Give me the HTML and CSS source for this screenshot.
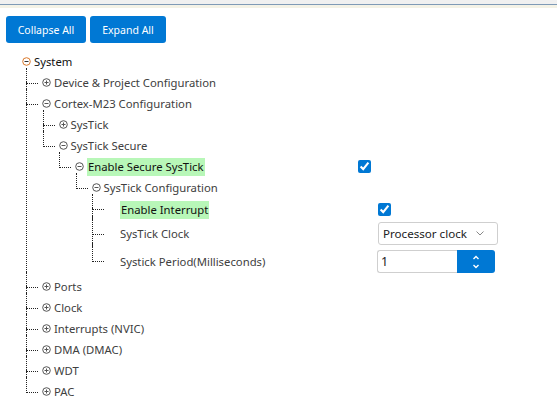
FILE: index.html
```html
<!DOCTYPE html>
<html lang="en">

<head>
    <meta charset="UTF-8">
    <title>Configuration</title>
    <link rel="stylesheet" href="styles.css">
</head>

<body>
    <div class="topbar"></div>
    <div class="toolbar">
        <button class="btn">Collapse All</button>
        <button class="btn">Expand All</button>
    </div>
    <ul class="tree">
        <li class="root">
            <div class="row">
                <svg class="tog" viewBox="0 0 9 9"><circle cx="4.5" cy="4.5" r="3.8" class="ring-sys"/><path d="M2.5 4.5h4"/></svg>
                <span class="label dark">System</span>
            </div>
            <ul>
                <li>
                    <div class="row">
                        <svg class="tog" viewBox="0 0 9 9"><circle cx="4.5" cy="4.5" r="3.8"/><path d="M2.5 4.5h4M4.5 2.5v4"/></svg>
                        <span class="label">Device &amp; Project Configuration</span>
                    </div>
                </li>
                <li>
                    <div class="row">
                        <svg class="tog" viewBox="0 0 9 9"><circle cx="4.5" cy="4.5" r="3.8"/><path d="M2.5 4.5h4"/></svg>
                        <span class="label">Cortex-M23 Configuration</span>
                    </div>
                    <ul>
                        <li>
                            <div class="row">
                                <svg class="tog" viewBox="0 0 9 9"><circle cx="4.5" cy="4.5" r="3.8"/><path d="M2.5 4.5h4M4.5 2.5v4"/></svg>
                                <span class="label">SysTick</span>
                            </div>
                        </li>
                        <li>
                            <div class="row">
                                <svg class="tog" viewBox="0 0 9 9"><circle cx="4.5" cy="4.5" r="3.8"/><path d="M2.5 4.5h4"/></svg>
                                <span class="label">SysTick Secure</span>
                            </div>
                            <ul>
                                <li>
                                    <div class="row">
                                        <svg class="tog" viewBox="0 0 9 9"><circle cx="4.5" cy="4.5" r="3.8"/><path d="M2.5 4.5h4"/></svg>
                                        <span class="label name-l3"><span class="hl">Enable Secure SysTick</span></span>
                                        <input type="checkbox" class="check" checked>
                                    </div>
                                    <ul>
                                        <li>
                                            <div class="row">
                                                <svg class="tog" viewBox="0 0 9 9"><circle cx="4.5" cy="4.5" r="3.8"/><path d="M2.5 4.5h4"/></svg>
                                                <span class="label">SysTick Configuration</span>
                                            </div>
                                            <ul>
                                                <li class="row-check">
                                                    <div class="row">
                                                        <span class="tog"></span>
                                                        <span class="label name-l5"><span class="hl">Enable Interrupt</span></span>
                                                        <input type="checkbox" class="check" checked>
                                                    </div>
                                                </li>
                                                <li class="row-select">
                                                    <div class="row">
                                                        <span class="tog"></span>
                                                        <span class="label name-l5">SysTick Clock</span>
                                                        <div class="select">
                                                            <span>Processor clock</span>
                                                            <svg class="chev" viewBox="0 0 8 5"><path d="M0.5 0.5l3.5 3.5 3.5-3.5"/></svg>
                                                        </div>
                                                    </div>
                                                </li>
                                                <li class="row-number">
                                                    <div class="row">
                                                        <span class="tog"></span>
                                                        <span class="label name-l5">Systick Period(Milliseconds)</span>
                                                        <div class="number">
                                                            <span class="num-field">1</span>
                                                            <span class="spin">
                                                                <svg viewBox="0 0 8 16"><path d="M1.5 5l2.5-2.5 2.5 2.5M1.5 11l2.5 2.5 2.5-2.5"/></svg>
                                                            </span>
                                                        </div>
                                                    </div>
                                                </li>
                                            </ul>
                                        </li>
                                    </ul>
                                </li>
                            </ul>
                        </li>
                    </ul>
                </li>
                <li>
                    <div class="row">
                        <svg class="tog" viewBox="0 0 9 9"><circle cx="4.5" cy="4.5" r="3.8"/><path d="M2.5 4.5h4M4.5 2.5v4"/></svg>
                        <span class="label">Ports</span>
                    </div>
                </li>
                <li>
                    <div class="row">
                        <svg class="tog" viewBox="0 0 9 9"><circle cx="4.5" cy="4.5" r="3.8"/><path d="M2.5 4.5h4M4.5 2.5v4"/></svg>
                        <span class="label">Clock</span>
                    </div>
                </li>
                <li>
                    <div class="row">
                        <svg class="tog" viewBox="0 0 9 9"><circle cx="4.5" cy="4.5" r="3.8"/><path d="M2.5 4.5h4M4.5 2.5v4"/></svg>
                        <span class="label">Interrupts (NVIC)</span>
                    </div>
                </li>
                <li>
                    <div class="row">
                        <svg class="tog" viewBox="0 0 9 9"><circle cx="4.5" cy="4.5" r="3.8"/><path d="M2.5 4.5h4M4.5 2.5v4"/></svg>
                        <span class="label">DMA (DMAC)</span>
                    </div>
                </li>
                <li>
                    <div class="row">
                        <svg class="tog" viewBox="0 0 9 9"><circle cx="4.5" cy="4.5" r="3.8"/><path d="M2.5 4.5h4M4.5 2.5v4"/></svg>
                        <span class="label">WDT</span>
                    </div>
                </li>
                <li>
                    <div class="row">
                        <svg class="tog" viewBox="0 0 9 9"><circle cx="4.5" cy="4.5" r="3.8"/><path d="M2.5 4.5h4M4.5 2.5v4"/></svg>
                        <span class="label">PAC</span>
                    </div>
                </li>
            </ul>
        </li>
    </ul>
</body>

</html>
```

FILE: styles.css
```css
* {
    margin: 0;
    padding: 0;
    box-sizing: border-box;
}

body {
    background: #fff;
    font: 11.3px/21px "Noto Sans", "Open Sans", sans-serif;
    color: #404040;
}

.topbar {
    height: 8px;
    background: #f0f0f0;
    border-bottom: 3px solid #f4f2e6;
    box-shadow: inset 0 -1px 0 #7f9ab6;
}

.toolbar {
    display: flex;
    gap: 4px;
    padding: 8px 0 0 6px;
}

.btn {
    height: 27px;
    border: none;
    border-radius: 3px;
    background: #0078d4;
    color: #fff;
    font: 10.5px "Noto Sans", "Open Sans", sans-serif;
    white-space: nowrap;
    text-align: center;
}

.btn:first-child {
    width: 80px;
}

.btn:last-child {
    width: 76px;
}

/* tree */
.tree {
    list-style: none;
    margin-top: 8px;
    padding-left: 6px;
}

.tree ul {
    list-style: none;
    margin-left: 16.5px;
}

.tree .root > ul {
    margin-left: 20px;
}

.tree li {
    position: relative;
}

.tree ul li::before {
    content: "";
    position: absolute;
    left: 0;
    top: -4px;
    width: 11px;
    height: 15px;
    border-left: 1px dotted #222;
    border-bottom: 1px dotted #222;
}

.tree ul li::after {
    content: "";
    position: absolute;
    left: 0;
    top: 10px;
    bottom: 0;
    border-left: 1px dotted #222;
}

.tree ul li:last-child::after {
    display: none;
}

.row {
    display: flex;
    align-items: center;
    height: 21px;
}

.row-check > .row {
    height: 22px;
}

.row-select > .row {
    height: 27px;
}

.row-number > .row {
    height: 29px;
}

.row-select::before {
    height: 18px !important;
}

.row-number::before {
    height: 18px !important;
}

.tog {
    flex: none;
    width: 9px;
    height: 9px;
    margin: 0 3px 0 16px;
    fill: none;
    stroke: #555;
    stroke-width: 1;
}

.tog .ring-sys {
    stroke: #d9782a;
}

.root > .row .tog path {
    stroke: #333;
}

.label {
    white-space: nowrap;
}

.dark {
    color: #111;
}

.hl {
    background: #b8f7b8;
    color: #111;
    padding: 1px 1px 2px;
}

.name-l3 {
    width: 271px;
}

.name-l5 {
    width: 258px;
}

.check {
    width: 13px;
    height: 13px;
    accent-color: #0078d4;
}

.select {
    display: flex;
    align-items: center;
    justify-content: space-between;
    width: 120px;
    height: 23px;
    padding: 0 13px 0 4px;
    border: 1px solid #cfcfcf;
    border-radius: 3px;
    color: #222;
    font-size: 11.6px;
}

.chev {
    width: 8px;
    height: 5px;
    fill: none;
    stroke: #888;
    stroke-width: 1;
}

.number {
    display: flex;
    height: 23px;
    margin-left: -1px;
}

.num-field {
    width: 80px;
    padding-left: 3px;
    border: 1px solid #cfcfcf;
    border-right: none;
    border-radius: 3px 0 0 3px;
    color: #222;
    font-size: 12.5px;
    line-height: 21px;
}

.spin {
    display: flex;
    align-items: center;
    justify-content: center;
    width: 38px;
    background: #0078d4;
    border-radius: 0 3px 3px 0;
}

.spin svg {
    width: 8px;
    height: 16px;
    fill: none;
    stroke: #fff;
    stroke-width: 1.4;
}
```
